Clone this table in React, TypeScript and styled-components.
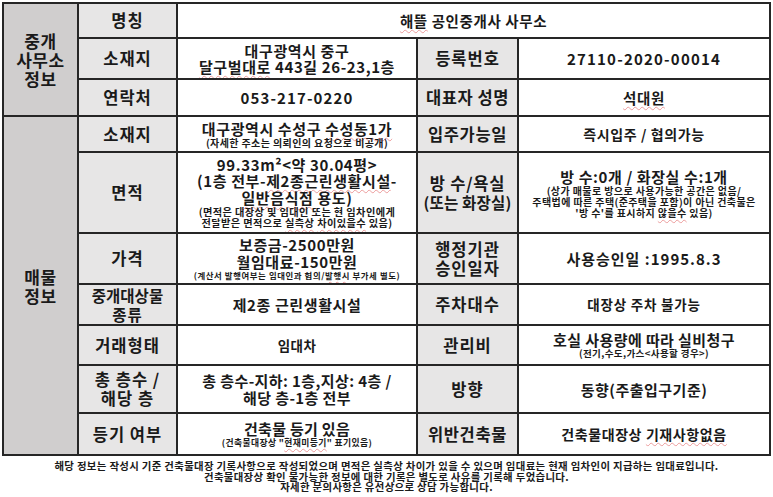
import React from "react";
import styled, { createGlobalStyle } from "styled-components";

const Global = createGlobalStyle`
  html, body { margin: 0; padding: 0; background: #ffffff; }
  body { font-family: "Noto Sans CJK KR", "Noto Sans", sans-serif; color: #1a1a1a; }
`;

const Page = styled.div`
  width: 773px;
  height: 497px;
  padding: 2px 0 0 2px;
  box-sizing: border-box;
  overflow: hidden;
`;

const Sheet = styled.div`
  display: grid;
  width: 769px;
  box-sizing: border-box;
  grid-template-columns: 73px 97px 238px 99px 250px;
  grid-template-rows: 33px 39px 35px 34px 79px 49px 39px 38px 46px 40px;
  gap: 2px;
  padding: 2px;
  background: #262626;
`;

const Cell = styled.div<{ $tone?: "cat" | "label" | "value"; $col?: string; $row?: string }>`
  display: flex;
  flex-direction: column;
  align-items: center;
  justify-content: center;
  text-align: center;
  background: ${(p) => (p.$tone === "cat" ? "#d0cece" : p.$tone === "label" ? "#e7e6e6" : "#ffffff")};
  grid-column: ${(p) => p.$col ?? "auto"};
  grid-row: ${(p) => p.$row ?? "auto"};
  overflow: hidden;
`;

const CatText = styled.div`
  font-size: 17px;
  font-weight: 700;
  line-height: 19px;
  letter-spacing: 0.6px;
  color: #1a1a1a;
`;

const LabelText = styled.div<{ $size?: number; $ls?: number }>`
  font-size: ${(p) => p.$size ?? 16.5}px;
  font-weight: 700;
  line-height: 19px;
  color: #1a1a1a;
  letter-spacing: ${(p) => p.$ls ?? 1}px;
  white-space: nowrap;
`;

const Main = styled.div<{ $size?: number; $lh?: number; $ls?: number }>`
  font-size: ${(p) => p.$size ?? 15}px;
  line-height: ${(p) => p.$lh ?? 17}px;
  font-weight: 700;
  color: #1a1a1a;
  white-space: nowrap;
  letter-spacing: ${(p) => p.$ls ?? 0.6}px;
`;

const Note = styled.div<{ $size?: number; $lh?: number; $ls?: number }>`
  font-size: ${(p) => p.$size ?? 10}px;
  line-height: ${(p) => p.$lh ?? 11}px;
  font-weight: 700;
  color: #1a1a1a;
  white-space: nowrap;
  letter-spacing: ${(p) => p.$ls ?? 0.4}px;
`;

const Spell = styled.span`
  text-decoration-line: underline;
  text-decoration-style: wavy;
  text-decoration-color: rgba(220, 70, 70, 0.5);
  text-decoration-thickness: 1px;
  text-underline-offset: 2px;
`;

const Footer = styled.div`
  margin-top: 5px;
  width: 769px;
  text-align: center;
  font-size: 10.4px;
  line-height: 10.5px;
  font-weight: 700;
  color: #1a1a1a;
  letter-spacing: 0.35px;
`;

export default function App() {
  return (
    <>
      <Global />
      <Page>
        <Sheet>
          <Cell $tone="cat" $col="1" $row="1 / span 3">
            <CatText>중개</CatText>
            <CatText>사무소</CatText>
            <CatText>정보</CatText>
          </Cell>
          <Cell $tone="label">
            <LabelText>명칭</LabelText>
          </Cell>
          <Cell $col="3 / span 3">
            <Main $size={14.5}>
              <Spell>해뜰</Spell> 공인중개사 사무소
            </Main>
          </Cell>

          <Cell $tone="label">
            <LabelText>소재지</LabelText>
          </Cell>
          <Cell>
            <Main $lh={16}>대구광역시 중구</Main>
            <Main $lh={16}>
              <Spell>달구벌대로</Spell> 443길 26-23,1층
            </Main>
          </Cell>
          <Cell $tone="label">
            <LabelText>등록번호</LabelText>
          </Cell>
          <Cell>
            <Main $ls={1.2}>27110-2020-00014</Main>
          </Cell>

          <Cell $tone="label">
            <LabelText>연락처</LabelText>
          </Cell>
          <Cell>
            <Main $ls={1.1}>053-217-0220</Main>
          </Cell>
          <Cell $tone="label">
            <LabelText $ls={0.6}>대표자 성명</LabelText>
          </Cell>
          <Cell>
            <Main $size={14.5}>
              <Spell>석대원</Spell>
            </Main>
          </Cell>

          <Cell $tone="cat" $col="1" $row="4 / span 7">
            <CatText>매물</CatText>
            <CatText>정보</CatText>
          </Cell>

          <Cell $tone="label">
            <LabelText>소재지</LabelText>
          </Cell>
          <Cell>
            <Main $lh={17}>
              대구광역시 수성구 <Spell>수성동1가</Spell>
            </Main>
            <Note>(자세한 주소는 의뢰인의 요청으로 비공개)</Note>
          </Cell>
          <Cell $tone="label">
            <LabelText $ls={0.6}>입주가능일</LabelText>
          </Cell>
          <Cell>
            <Main $size={14}>즉시입주 / 협의가능</Main>
          </Cell>

          <Cell $tone="label">
            <LabelText>면적</LabelText>
          </Cell>
          <Cell>
            <Main $lh={16.5}>99.33m²&lt;약 30.04평&gt;</Main>
            <Main $lh={16.5}>
              (1층 전부-<Spell>제2종근린생활시설</Spell>-
            </Main>
            <Main $lh={16.5}>
              <Spell>일반음식점</Spell> 용도)
            </Main>
            <Note $size={10.2} $lh={11}>
              (면적은 대장상 및 임대인 또는 현 임차인에게
            </Note>
            <Note $size={10.2} $lh={11}>
              전달받은 면적으로 <Spell>실측상</Spell> <Spell>차이있을수</Spell> 있음)
            </Note>
          </Cell>
          <Cell $tone="label">
            <LabelText $size={16.5} $ls={0.8}>방 수/욕실</LabelText>
            <LabelText $size={15.5} $ls={0.2}>(또는 화장실)</LabelText>
          </Cell>
          <Cell>
            <Main $lh={17}>방 수:0개 / 화장실 수:1개</Main>
            <Note $lh={11}>(상가 매물로 방으로 사용가능한 공간은 없음/</Note>
            <Note $lh={11}>주택법에 따른 주택(준주택을 포함)이 아닌 건축물은</Note>
            <Note $lh={11}>
              '방 수'를 표시하지 <Spell>않을수</Spell> 있음)
            </Note>
          </Cell>

          <Cell $tone="label">
            <LabelText>가격</LabelText>
          </Cell>
          <Cell>
            <Main $lh={16.5}>보증금-2500만원</Main>
            <Main $lh={16.5}>월임대료-150만원</Main>
            <Note $size={8.4} $lh={10} $ls={0.6}>
              (계산서 발행여부는 임대인과 협의/<Spell>발행시</Spell> 부가세 별도)
            </Note>
          </Cell>
          <Cell $tone="label">
            <LabelText>행정기관</LabelText>
            <LabelText>승인일자</LabelText>
          </Cell>
          <Cell>
            <Main $ls={1}>사용승인일 :1995.8.3</Main>
          </Cell>

          <Cell $tone="label">
            <LabelText $size={15.5} $ls={0}>중개대상물</LabelText>
            <LabelText $size={15.5}>종류</LabelText>
          </Cell>
          <Cell>
            <Main>제2종 근린생활시설</Main>
          </Cell>
          <Cell $tone="label">
            <LabelText>주차대수</LabelText>
          </Cell>
          <Cell>
            <Main $size={13.5} $ls={0.8}>대장상 주차 불가능</Main>
          </Cell>

          <Cell $tone="label">
            <LabelText>거래형태</LabelText>
          </Cell>
          <Cell>
            <Main $size={13.5} $ls={0.4}>임대차</Main>
          </Cell>
          <Cell $tone="label">
            <LabelText>관리비</LabelText>
          </Cell>
          <Cell>
            <Main $lh={17} $ls={0.4}>호실 사용량에 따라 실비청구</Main>
            <Note $size={9.5} $lh={11}>(전기,수도,가스&lt;사용할 경우&gt;)</Note>
          </Cell>

          <Cell $tone="label">
            <LabelText>총 층수 /</LabelText>
            <LabelText>해당 층</LabelText>
          </Cell>
          <Cell>
            <Main $lh={17} $ls={0.4}>총 층수-지하: 1층,지상: 4층 /</Main>
            <Main $lh={17} $ls={0.4}>해당 층-1층 전부</Main>
          </Cell>
          <Cell $tone="label">
            <LabelText>방향</LabelText>
          </Cell>
          <Cell>
            <Main $ls={0.5}>동향(주출입구기준)</Main>
          </Cell>

          <Cell $tone="label">
            <LabelText>등기 여부</LabelText>
          </Cell>
          <Cell>
            <Main $lh={17} $ls={0.3}>건축물 등기 있음</Main>
            <Note $size={8.8} $lh={11}>
              (건축물대장상 "<Spell>현재미등기</Spell>" 표기있음)
            </Note>
          </Cell>
          <Cell $tone="label">
            <LabelText $ls={0.6}>위반건축물</LabelText>
          </Cell>
          <Cell>
            <Main $size={14}>
              건축물대장상 <Spell>기재사항없음</Spell>
            </Main>
          </Cell>
        </Sheet>
        <Footer>
          <div>
            해당 정보는 작성시 기준 건축물대장 기록사항으로 작성되었으며 면적은 실측상 차이가 있을 수 있으며 임대료는 현재 임차인이 지급하는 임대료입니다.
          </div>
          <div>건축물대장상 확인 불가능한 정보에 대한 기록은 별도로 사유를 기록해 두었습니다.</div>
          <div>자세한 문의사항은 유선상으로 상담 가능합니다.</div>
        </Footer>
      </Page>
    </>
  );
}
